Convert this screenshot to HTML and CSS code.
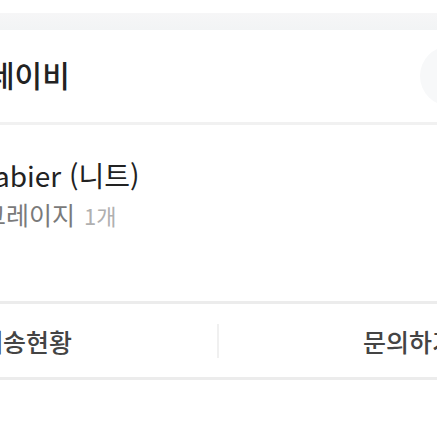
FILE: index.html
```html
<!DOCTYPE html>
<html lang="ko">
<head>
  <meta charset="UTF-8">
  <meta name="viewport" content="width=device-width, initial-scale=1.0">
  <title>주문 상세</title>
  <link rel="stylesheet" href="styles.css">
</head>
<body>

  <div class="page">
    <div class="top-gap"></div>
    <div class="band"></div>

    <!-- Option title -->
    <section class="title-row">
      <h2 class="title">네이비</h2>
      <span class="round-btn"></span>
    </section>

    <!-- Ordered item -->
    <section class="item">
      <p class="item-name">Vlabier (니트)</p>
      <p class="item-opt">그레이지 <span class="qty">1개</span></p>
    </section>

    <!-- Actions -->
    <section class="actions">
      <div class="action left"><span>배송현황</span></div>
      <div class="divider"></div>
      <div class="action right"><span>문의하기</span></div>
    </section>
  </div>

</body>
</html>
```

FILE: styles.css
```css
html, body {
  margin: 0;
  padding: 0;
  background: #fff;
  overflow: hidden;
}

.page {
  width: 437px;
  font-family: "Noto Sans CJK KR", "Noto Sans", sans-serif;
  color: #222;
  overflow: hidden;
}

.top-gap {
  height: 13px;
}

.band {
  height: 17px;
  background: linear-gradient(#f6f6f7, #f2f4f5);
}

.title-row {
  height: 92px;
  display: flex;
  align-items: center;
  justify-content: space-between;
  border-bottom: 3px solid #f1f1f1;
}

.title {
  margin: -4px 0 0 -13px;
  font-size: 30px;
  font-weight: 500;
  color: #222;
  line-height: 1;
}

.round-btn {
  width: 60px;
  height: 60px;
  border-radius: 50%;
  background: #f7f8f9;
  margin-right: -43px;
}

.item {
  height: 176px;
  padding-top: 32px;
  box-sizing: border-box;
}

.item-name {
  margin: 0 0 0 -30px;
  font-size: 28px;
  line-height: 36px;
  color: #222;
}

.item-opt {
  margin: 6px 0 0 -17px;
  font-size: 25px;
  line-height: 30px;
  color: #7a7a7a;
}

.qty {
  font-size: 22px;
  color: #b0b0b0;
  margin-left: 2px;
}

.actions {
  height: 73px;
  display: flex;
  align-items: center;
  border-top: 3px solid #ececec;
  border-bottom: 3px solid #ececec;
}

.action {
  flex: 1;
  font-size: 25px;
  font-weight: 500;
  color: #444;
}

.action.left {
  margin-left: -20px;
  white-space: nowrap;
}

.action.right {
  text-align: right;
  margin-right: -18px;
  white-space: nowrap;
}

.divider {
  width: 2px;
  height: 34px;
  background: #f0f0f0;
}
```
